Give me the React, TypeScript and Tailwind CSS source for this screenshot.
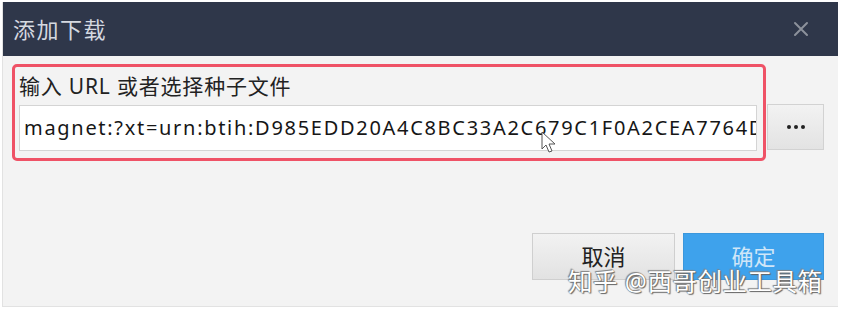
const FONT = "font-['Noto_Sans','Noto_Sans_CJK_SC',sans-serif]";

export default function App() {
  return (
    <div className={`relative w-[843px] h-[316px] bg-white pt-[2px] pl-[2px] ${FONT}`}>
      <div className="w-[836px] h-[305px] flex flex-col border-l border-b border-[#e2e2e2] bg-[#f3f3f3]">
        {/* title bar */}
        <div className="h-[54px] bg-[#2f374a] flex items-center justify-between pl-[10px] pr-[29px]">
          <span className="text-[22px] text-[#d5d9e0] tracking-[1.5px]">添加下载</span>
          <svg width="16" height="16" viewBox="0 0 16 16" className="text-[#8c919b]">
            <path d="M2 2 L14 14 M14 2 L2 14" stroke="currentColor" strokeWidth="2" strokeLinecap="round" />
          </svg>
        </div>

        {/* body */}
        <div className="flex-1 flex flex-col pt-[8px] pl-[9px] pr-[14px]">
          <div className="flex items-start">
            <div className="w-[754px] h-[97px] border-[3px] border-[#ef5266] rounded-[5px] pl-[4px] pr-[6px] pt-[2px]">
              <div className="h-[36px] flex items-center text-[21px] tracking-[0.8px] text-[#222]">输入 URL 或者选择种子文件</div>
              <div className="h-[46px] bg-white border border-[#d4d4d4] flex items-center pl-[4px] overflow-hidden whitespace-nowrap">
                <span className="text-[20px] text-[#161616] tracking-[1.7px]">magnet:?xt=urn:btih:D985EDD20A4C8BC33A2C679C1F0A2CEA7764D</span>
              </div>
            </div>
            <button className="mt-[40px] ml-[1px] w-[57px] h-[46px] border border-[#d2d2d2] bg-gradient-to-b from-[#f2f2f2] to-[#e3e3e3] flex items-center justify-center gap-[3px]">
              <span className="w-[4px] h-[4px] rounded-full bg-[#222]" />
              <span className="w-[4px] h-[4px] rounded-full bg-[#222]" />
              <span className="w-[4px] h-[4px] rounded-full bg-[#222]" />
            </button>
          </div>

          <div className="flex justify-end gap-[8px] mt-[72px]">
            <button className="w-[143px] h-[47px] border border-[#cfcfcf] bg-gradient-to-b from-[#f2f2f2] to-[#e2e2e2] text-[22px] text-[#222]">取消</button>
            <button className="w-[141px] h-[47px] border border-[#3b97dc] bg-[#3ea2ec] text-[22px] text-[#cfe6f8]">确定</button>
          </div>
        </div>
      </div>

      {/* mouse cursor */}
      <svg className="absolute left-[541px] top-[131px]" width="18" height="24" viewBox="0 0 18 24">
        <path d="M1 1 L1 18 L5 14 L8 21 L11 20 L8 13 L14 13 Z" fill="#fff" stroke="#555" strokeWidth="1" strokeLinejoin="round" />
      </svg>

      {/* watermark */}
      <div className="absolute left-[568px] top-[266px] text-[24.5px] leading-[32px] text-white tracking-[0.5px] [text-shadow:0_0_1px_#555,1px_1px_1px_#666,-1px_-1px_1px_#888]">
        知乎 @西哥创业工具箱
      </div>
    </div>
  );
}
